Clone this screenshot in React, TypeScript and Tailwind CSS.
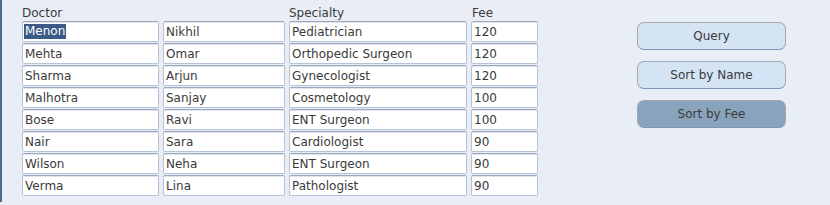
const rows = [
  ['Menon', 'Nikhil', 'Pediatrician', '120'],
  ['Mehta', 'Omar', 'Orthopedic Surgeon', '120'],
  ['Sharma', 'Arjun', 'Gynecologist', '120'],
  ['Malhotra', 'Sanjay', 'Cosmetology', '100'],
  ['Bose', 'Ravi', 'ENT Surgeon', '100'],
  ['Nair', 'Sara', 'Cardiologist', '90'],
  ['Wilson', 'Neha', 'ENT Surgeon', '90'],
  ['Verma', 'Lina', 'Pathologist', '90'],
];

function Field({ value, width, selected }: { value: string; width: string; selected?: boolean }) {
  return (
    <div
      className={`${width} h-[21px] bg-white border border-[#b4c3d6] border-t-[#9aa9bc] rounded-[2px] shadow-[inset_0_1px_0_#dfe5ec] flex items-center pl-[2px] text-[12px] text-[#3a3a3a] leading-none overflow-hidden whitespace-nowrap`}
    >
      {selected ? <span className="bg-[#3b5a86] text-white px-[1px] -ml-[1px] h-[15px] leading-[15px]">{value}</span> : value}
    </div>
  );
}

function Btn({ label, active }: { label: string; active?: boolean }) {
  return (
    <button
      className={`w-[149px] h-[28px] rounded-[7px] border border-[#a4a9b0] border-b-[#7f95b3] text-[12px] text-[#3a3a3a] ${active ? 'bg-[#8aa3bd]' : 'bg-[#d5e4f5]'}`}
    >
      {label}
    </button>
  );
}

export default function App() {
  return (
    <div className="w-[830px] h-[205px] bg-[#e9eef6] font-['DejaVu_Sans',sans-serif] relative">
      <div className="absolute left-0 top-0 w-[2px] h-[202px] bg-[#4f6a90]" />
      <div className="flex pl-[22px] pt-[5px]">
        <div className="flex flex-col">
          <div className="flex text-[12px] text-[#3a3a3a] h-[16px] leading-[16px]">
            <span className="w-[267px]">Doctor</span>
            <span className="w-[183px]">Specialty</span>
            <span>Fee</span>
          </div>
          <div className="flex flex-col gap-[1px]">
            {rows.map((r, i) => (
              <div key={i} className="flex gap-[4px]">
                <Field value={r[0]} width="w-[137px]" selected={i === 0} />
                <Field value={r[1]} width="w-[122px]" />
                <Field value={r[2]} width="w-[178px]" />
                <Field value={r[3]} width="w-[67px]" />
              </div>
            ))}
          </div>
        </div>
        <div className="flex flex-col gap-[11px] ml-[99px] mt-[17px]">
          <Btn label="Query" />
          <Btn label="Sort by Name" />
          <Btn label="Sort by Fee" active />
        </div>
      </div>
    </div>
  );
}
